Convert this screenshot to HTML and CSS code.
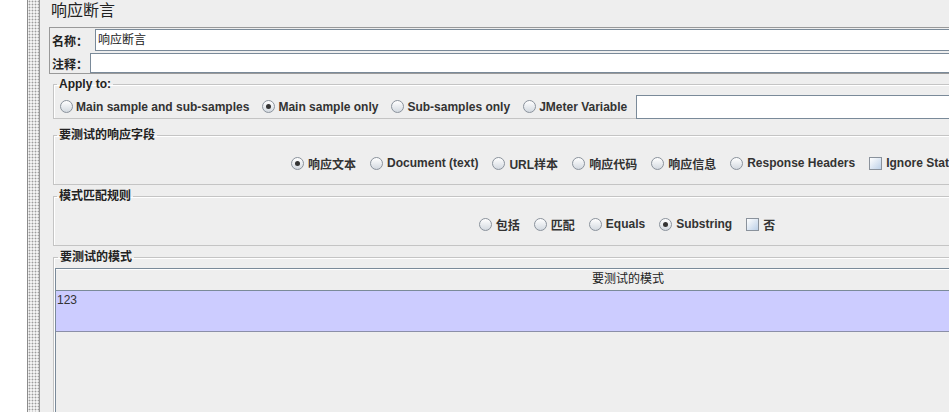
FILE: index.html
```html
<!DOCTYPE html>
<html lang="zh">
<head>
    <meta charset="UTF-8">
    <title>响应断言</title>
    <link rel="stylesheet" href="styles.css">
</head>
<body>
    <div class="app">
        <div class="tree"></div>
        <div class="splitter"></div>
        <div class="panel">
            <div class="title">响应断言</div>

            <div class="name-box">
                <div class="field">
                    <label class="field-label name-label">名称：</label>
                    <div class="text-input tall">响应断言</div>
                </div>
                <div class="field">
                    <label class="field-label comment-label">注释：</label>
                    <div class="text-input"></div>
                </div>
            </div>

            <fieldset class="group apply">
                <legend>Apply to:</legend>
                <div class="opts">
                    <span class="opt"><span class="radio"></span>Main sample and sub-samples</span>
                    <span class="opt"><span class="radio on"></span>Main sample only</span>
                    <span class="opt"><span class="radio"></span>Sub-samples only</span>
                    <span class="opt"><span class="radio"></span>JMeter Variable</span>
                    <div class="var-input"></div>
                </div>
            </fieldset>

            <fieldset class="group">
                <legend>要测试的响应字段</legend>
                <div class="opts centered">
                    <span class="opt"><span class="radio on"></span>响应文本</span>
                    <span class="opt"><span class="radio"></span>Document (text)</span>
                    <span class="opt"><span class="radio"></span>URL样本</span>
                    <span class="opt"><span class="radio"></span>响应代码</span>
                    <span class="opt"><span class="radio"></span>响应信息</span>
                    <span class="opt"><span class="radio"></span>Response Headers</span>
                    <span class="opt"><span class="check"></span>Ignore Status</span>
                </div>
            </fieldset>

            <fieldset class="group">
                <legend>模式匹配规则</legend>
                <div class="opts centered">
                    <span class="opt"><span class="radio"></span>包括</span>
                    <span class="opt"><span class="radio"></span>匹配</span>
                    <span class="opt"><span class="radio"></span>Equals</span>
                    <span class="opt"><span class="radio on"></span>Substring</span>
                    <span class="opt"><span class="check"></span>否</span>
                </div>
            </fieldset>

            <fieldset class="group patterns">
                <legend>要测试的模式</legend>
                <div class="table">
                    <div class="table-head">要测试的模式</div>
                    <div class="table-row">123</div>
                </div>
            </fieldset>
        </div>
    </div>
</body>
</html>
```

FILE: styles.css
```css
body {
    margin: 0;
    background-color: #eeeeee;
    font-family: "Liberation Sans", "Noto Sans CJK SC", sans-serif;
    font-size: 12px;
    color: #333;
    overflow: hidden;
}

.app {
    display: flex;
    height: 412px;
}

.tree {
    width: 27px;
    flex-shrink: 0;
    background-color: #fff;
    border-right: 1px solid #8c8c8c;
}

.splitter {
    width: 11px;
    flex-shrink: 0;
    background-color: #f2f2f2;
    background-image: radial-gradient(#9c9c9c 0.8px, transparent 1.1px);
    background-size: 3px 3px;
    border-right: 1px solid #9a9a9a;
}

.panel {
    width: 1156px;
    flex-shrink: 0;
    padding-left: 9px;
}

.title {
    height: 27px;
    line-height: 22px;
    padding-left: 2px;
    font-size: 16px;
    color: #222;
}

.name-box {
    border: 1px solid #999;
}

.field {
    display: flex;
    align-items: center;
    padding-top: 1px;
}

.field-label {
    font-weight: bold;
    padding-left: 2px;
    color: #222;
}

.name-label {
    width: 43px;
}

.comment-label {
    width: 38px;
}

.text-input {
    flex: 1;
    height: 18px;
    line-height: 18px;
    padding-left: 2px;
    background-color: #fff;
    border: 1px solid #7a8a99;
    color: #222;
}

.text-input.tall {
    height: 20px;
    line-height: 20px;
    margin-bottom: 1px;
}

.group {
    margin: 4px 4px 0 4px;
    padding: 9px 0;
    border: 1px solid #c4c4c4;
    box-shadow: inset 1px 1px 0 #fff;
}

.group legend {
    margin-left: 3px;
    padding: 0 2px;
    font-weight: bold;
    line-height: 14px;
    color: #222;
}

.apply {
    margin-top: 3px;
    padding: 4px 0 0 0;
}

.apply .opts {
    padding-left: 6px;
    gap: 13px;
}

.apply + .group {
    margin-top: 9px;
}

.opts {
    display: flex;
    align-items: center;
    gap: 14px;
    height: 23px;
    font-weight: bold;
}

.opts.centered {
    justify-content: center;
    height: 24px;
}

.opt {
    display: flex;
    align-items: center;
    gap: 3px;
    white-space: nowrap;
}

.centered .opt {
    gap: 4px;
}

.radio {
    position: relative;
    width: 11px;
    height: 11px;
    border: 1px solid #8a929c;
    border-radius: 50%;
    background: linear-gradient(#ffffff, #d3d9e0);
}

.radio.on::after {
    content: "";
    position: absolute;
    left: 3px;
    top: 3px;
    width: 5px;
    height: 5px;
    border-radius: 50%;
    background-color: #333;
}

.check {
    width: 11px;
    height: 11px;
    border: 1px solid #8a929c;
    background: linear-gradient(135deg, #ffffff, #bcd0e8);
}

.var-input {
    flex: 1;
    height: 22px;
    margin: 0 10px 0 -4px;
    background-color: #fff;
    border: 1px solid #7a8a99;
}

.patterns {
    padding: 4px 0 0 1px;
    height: 200px;
}

.table {
    border-top: 1px solid #7a8a99;
    border-left: 1px solid #7a8a99;
    height: 200px;
}

.table-head {
    height: 21px;
    line-height: 21px;
    text-align: center;
    border-bottom: 1px solid #7a8a99;
    box-shadow: inset 0 1px 0 #fff;
    color: #222;
}

.table-row {
    height: 38px;
    padding: 2px 0 0 1px;
    line-height: 14px;
    background-color: #ccccff;
    border-bottom: 1px solid #8b8fa8;
    color: #333;
}
```
